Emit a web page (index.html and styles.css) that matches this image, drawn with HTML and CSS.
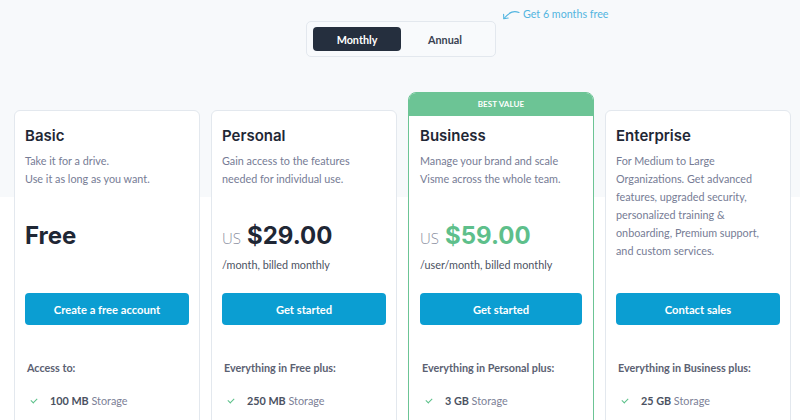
FILE: index.html
```html
<!DOCTYPE html>
<html>
<head>
<meta charset="utf-8">
<link rel="stylesheet" href="styles.css">
</head>
<body>
<div class="page">
  <div class="toggle-wrap">
    <div class="toggle">
      <button class="opt active">Monthly</button>
      <button class="opt">Annual</button>
    </div>
    <div class="promo">
      <svg class="promo-arrow" width="18" height="10" viewBox="0 0 18 10"><path d="M17 2.5 C12 0.5 8 1.5 2 8.5" fill="none" stroke="#52b5e0" stroke-width="1.1" stroke-linecap="round"/><path d="M1.6 4.2 L1.8 8.8 L6.2 8" fill="none" stroke="#52b5e0" stroke-width="1.1" stroke-linecap="round" stroke-linejoin="round"/></svg>
      <span>Get 6 months free</span>
    </div>
  </div>

  <div class="plans">
    <div class="card">
      <div class="body">
        <h2 class="title">Basic</h2>
        <div class="top">
          <p class="desc">Take it for a drive.<br>Use it as long as you want.</p>
          <div class="price-block">
            <div class="price"><span class="amount">Free</span></div>
          </div>
        </div>
        <a class="btn">Create a free account</a>
        <p class="list-head">Access to:</p>
        <ul class="features"><li><span class="check"></span><b>100 MB</b> Storage</li></ul>
      </div>
    </div>

    <div class="card">
      <div class="body">
        <h2 class="title">Personal</h2>
        <div class="top">
          <p class="desc">Gain access to the features needed for individual use.</p>
          <div class="price-block">
            <div class="price"><span class="cur">US</span><span class="amount">$29.00</span></div>
            <p class="per">/month, billed monthly</p>
          </div>
        </div>
        <a class="btn">Get started</a>
        <p class="list-head">Everything in Free plus:</p>
        <ul class="features"><li><span class="check"></span><b>250 MB</b> Storage</li></ul>
      </div>
    </div>

    <div class="card featured">
      <div class="badge">BEST VALUE</div>
      <div class="body">
        <h2 class="title">Business</h2>
        <div class="top">
          <p class="desc">Manage your brand and scale Visme across the whole team.</p>
          <div class="price-block">
            <div class="price"><span class="cur">US</span><span class="amount green">$59.00</span></div>
            <p class="per">/user/month, billed monthly</p>
          </div>
        </div>
        <a class="btn">Get started</a>
        <p class="list-head">Everything in Personal plus:</p>
        <ul class="features"><li><span class="check"></span><b>3 GB</b> Storage</li></ul>
      </div>
    </div>

    <div class="card">
      <div class="body">
        <h2 class="title">Enterprise</h2>
        <div class="top">
          <p class="desc">For Medium to Large Organizations. Get advanced features, upgraded security, personalized training &amp; onboarding, Premium support, and custom services.</p>
        </div>
        <a class="btn">Contact sales</a>
        <p class="list-head">Everything in Business plus:</p>
        <ul class="features"><li><span class="check"></span><b>25 GB</b> Storage</li></ul>
      </div>
    </div>
  </div>
</div>
</body>
</html>
```

FILE: styles.css
```css
* { box-sizing: border-box; }
html, body { margin: 0; padding: 0; }
body {
  font-family: Lato, "Liberation Sans", sans-serif;
  background: linear-gradient(#f7f9fb 0, #f7f9fb 197px, #ffffff 197px);
  color: #2a3140;
  overflow: hidden;
  height: 420px;
}
.page { padding-top: 21px; }

.toggle-wrap {
  position: relative;
  width: 190px;
  margin: 0 0 0 306px;
}
.toggle {
  display: flex;
  padding: 5px 6px;
  height: 36px;
  border: 1px solid #e3e8ee;
  border-radius: 5px;
  background: #f8fafc;
}
.opt {
  width: 88px;
  height: 24px;
  border: 0;
  border-radius: 4px;
  background: transparent;
  font-family: Lato, "Liberation Sans", sans-serif;
  font-weight: 700;
  font-size: 10.8px;
  color: #3a4252;
  padding: 0;
}
.opt.active { background: #252f3e; color: #fff; }

.promo {
  position: absolute;
  left: 196px;
  top: -15px;
  display: flex;
  align-items: center;
  gap: 3px;
  white-space: nowrap;
  color: #52b5e0;
  font-size: 10.7px;
}
.promo-arrow { margin-top: 4px; }

.plans {
  display: flex;
  align-items: flex-start;
  gap: 11px;
  padding: 0 11px 0 14px;
  margin-top: 35px;
}
.card {
  width: 186px;
  flex: none;
  margin-top: 18px;
  background: #fff;
  border: 1px solid #e3e8ee;
  border-radius: 6px;
  min-height: 360px;
}
.card.featured {
  margin-top: 0;
  border-color: #6cc495;
  border-radius: 8px 8px 6px 6px;
  overflow: hidden;
}
.badge {
  height: 23px;
  background: #6cc495;
  color: #fff;
  font-size: 8px;
  font-weight: 700;
  text-align: center;
  line-height: 23px;
  letter-spacing: 0.1px;
}
.body { padding: 15px 10px 30px 10px; }
.featured .body { padding-top: 10px; padding-left: 11px; padding-right: 11px; }

.title {
  margin: 0;
  font-family: Inter, "Open Sans", sans-serif;
  font-weight: 600;
  font-size: 15px;
  line-height: 20px;
  color: #1f2735;
}
.top {
  display: flex;
  flex-direction: column;
  min-height: 141px;
  margin-top: 6px;
}
.desc {
  margin: 0;
  max-width: 154px;
  font-size: 10.8px;
  line-height: 18px;
  color: #767c95;
}
.price-block { margin-top: auto; height: 72px; }
.price {
  display: flex;
  align-items: baseline;
  gap: 6px;
  height: 30px;
  line-height: 30px;
}
.cur {
  font-family: "Open Sans", sans-serif;
  font-weight: 300;
  font-size: 15px;
  color: #8a8fa0;
}
.amount {
  font-family: Inter, "Open Sans", sans-serif;
  font-weight: 700;
  font-size: 24px;
  color: #1f2735;
}
.amount.green { color: #5ebf8b; }
.per {
  margin: 5px 0 0;
  font-size: 10.8px;
  line-height: 18px;
  color: #4b5262;
}
.btn {
  display: flex;
  align-items: center;
  justify-content: center;
  height: 32px;
  background: #0b9ed2;
  color: #fff;
  border-radius: 4px;
  font-size: 11.2px;
  font-weight: 700;
}
.list-head {
  margin: 34px 0 0 2px;
  font-size: 10.8px;
  line-height: 18px;
  font-weight: 700;
  color: #5b6172;
}
.features {
  list-style: none;
  margin: 15px 0 0;
  padding: 0;
}
.features li {
  display: flex;
  align-items: center;
  font-size: 10.8px;
  line-height: 18px;
  color: #7b8096;
  white-space: pre;
}
.features b { color: #4b5262; font-weight: 700; }
.check {
  width: 6px;
  height: 4px;
  margin: 0 13px 2px 6px;
  border-left: 1.2px solid #5cc08a;
  border-bottom: 1.2px solid #5cc08a;
  transform: rotate(-45deg);
}
```
